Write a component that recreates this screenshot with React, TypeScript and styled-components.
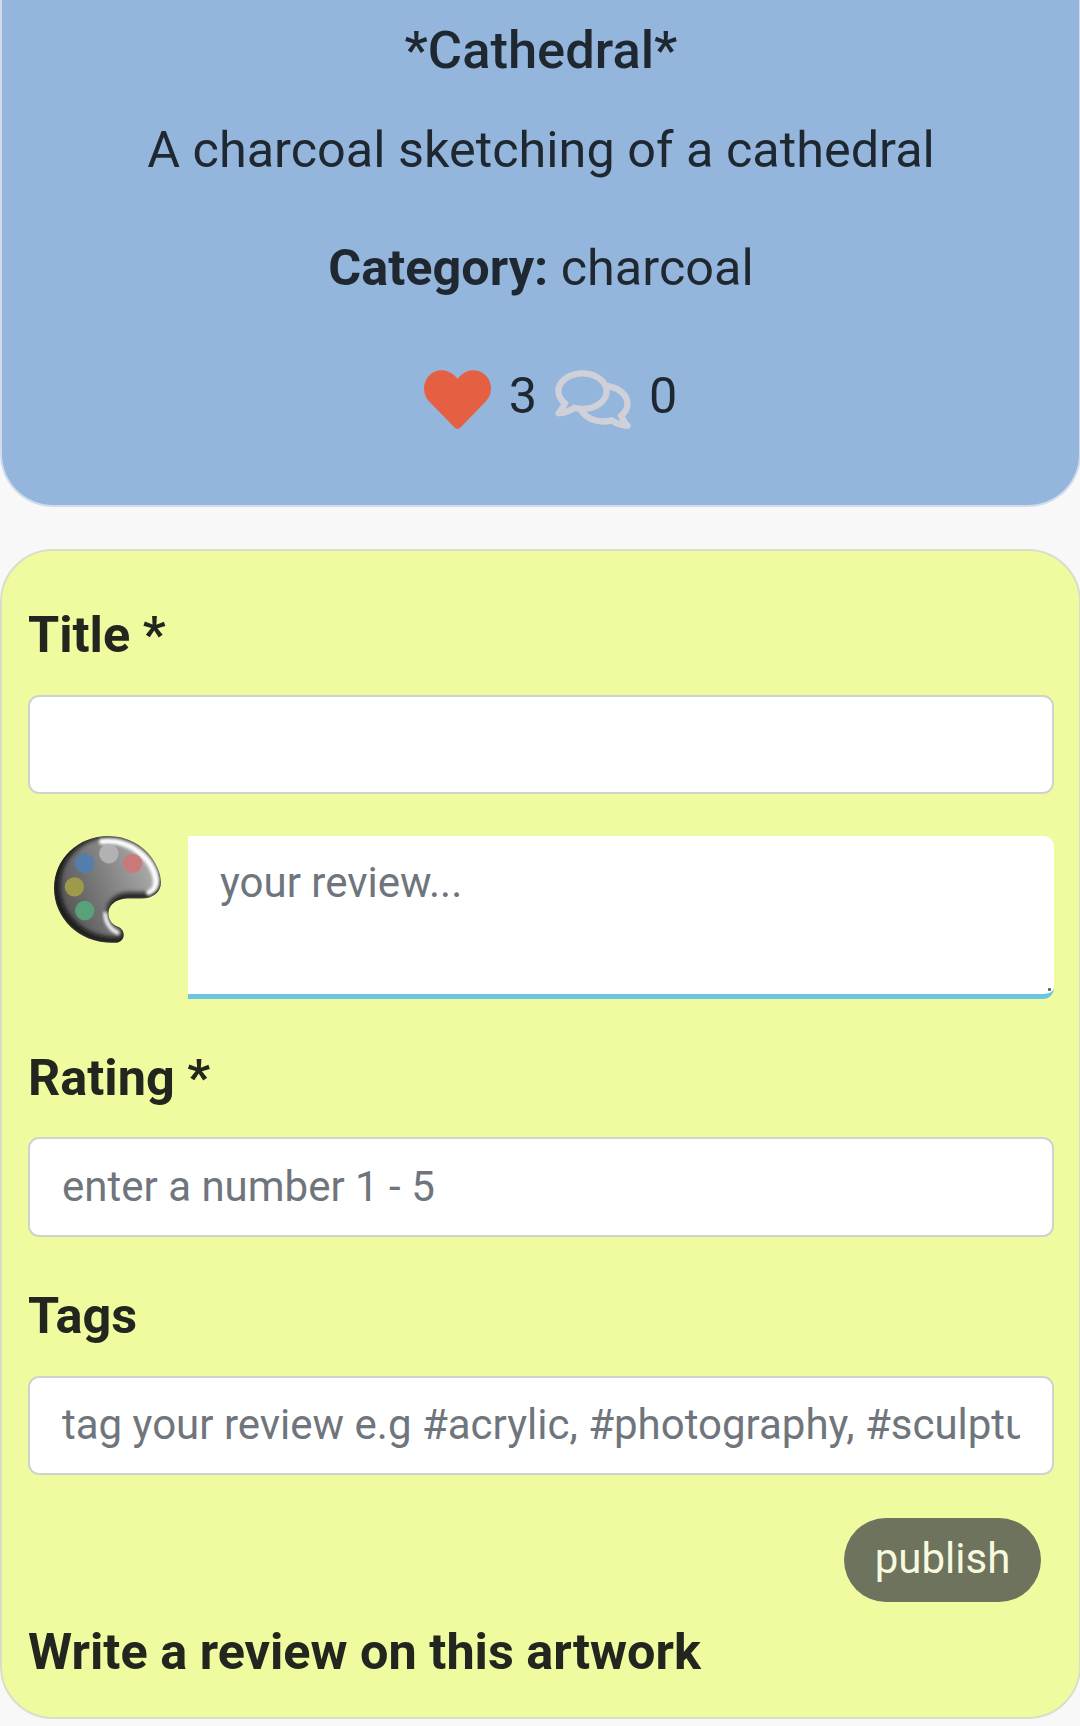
import React from "react";
import styled, { createGlobalStyle } from "styled-components";
import { FaHeart, FaRegComments } from "react-icons/fa";

const GlobalStyle = createGlobalStyle`
  *, *::before, *::after { box-sizing: border-box; }
  body {
    margin: 0;
    background: #f8f8f8;
    color: #1f2830;
    font-family: Roboto, "Liberation Sans", sans-serif;
    overflow: hidden;
  }
`;

const Page = styled.main`
  width: 1081px;
  height: 1726px;
  overflow: hidden;
  display: flex;
  flex-direction: column;
  gap: 42px;
  font-size: 50.4px;
  line-height: 75.6px;
`;

const ArtworkCard = styled.section`
  height: 507px;
  padding: 19px 0 0 1px;
  background: #94b6dd;
  border: 2px solid #d0dcec;
  border-top: 0;
  border-radius: 0 0 53px 53px;
  text-align: center;
`;

const ArtworkTitle = styled.h1`
  margin: 0 0 30px;
  font-size: 52.5px;
  line-height: 63px;
  font-weight: 500;
`;

const Paragraph = styled.p`
  margin: 0 0 42px;
`;

const Stats = styled.div`
  display: flex;
  justify-content: center;
  align-items: flex-start;
  padding: 11px 0 0 37px;
`;

const StatIcon = styled.span<{ $color: string; $width: number }>`
  display: flex;
  width: ${(p) => p.$width}px;
  height: 67px;
  margin-top: 8px;
  color: ${(p) => p.$color};
  svg { width: 100%; height: 100%; }
`;

const Count = styled.span`
  margin: 0 18px;
`;

const ReviewForm = styled.form`
  height: 1170px;
  padding: 46.4px 25px 0 26px;
  background: #f0fb9f;
  border: 2px solid #d9decb;
  border-radius: 53px;
`;

const Label = styled.label`
  display: block;
  height: 75px;
  margin-bottom: 22.6px;
  color: #22261f;
  font-weight: 700;
`;

const Input = styled.input`
  display: block;
  width: 100%;
  height: 99.4px;
  margin: 0 0 41.6px;
  padding: 0 32px 1px;
  border: 2px solid #cfd3cf;
  border-radius: 11px;
  background: #fff;
  font: 42px Roboto, "Liberation Sans", sans-serif;
  &::placeholder { color: #6f757c; opacity: 1; }
`;

const ReviewRow = styled.div`
  position: relative;
  display: flex;
  height: 163px;
  margin-bottom: 40.6px;
  padding-left: 26px;
`;

const Avatar = styled.svg`
  width: 107px;
  height: 107px;
  margin-right: 27px;
`;

const ReviewText = styled.textarea`
  flex: 1;
  height: 163px;
  padding: 15px 32px;
  border: 0;
  border-bottom: 5px solid #6ac6e2;
  border-radius: 0 11px 11px 0;
  background: #fff;
  font: 42px/63px Roboto, "Liberation Sans", sans-serif;
  resize: none;
  &::placeholder { color: #6f757c; opacity: 1; }
`;

const ResizeGrip = styled.span`
  position: absolute;
  right: 3px;
  bottom: 8px;
  width: 3px;
  height: 3px;
  border-radius: 1px;
  background: #5d6066;
`;

const Actions = styled.div`
  display: flex;
  justify-content: flex-end;
  padding: 1.2px 13px 0 0;
  margin-bottom: 12px;
`;

const PublishButton = styled.button`
  width: 197px;
  height: 84px;
  padding: 0 0 2px;
  border: 0;
  border-radius: 42px;
  background: #6e735d;
  color: #f6fadf;
  font: 42px/80px Roboto, "Liberation Sans", sans-serif;
`;

const palettePath =
  "M235 78C290 78 336 104 364 142C382 168 392 194 392 217C392 247 366 265 335 265L290 265C255 266 235 287 235 308C235 332 250 345 266 350C286 360 286 390 262 397C150 405 72 325 72 235C72 145 145 78 235 78Z";

const wells = [
  { x: 236, y: 131, fill: "#b5b5b7" },
  { x: 307, y: 160, fill: "#cb7774" },
  { x: 164, y: 160, fill: "#4f7fb1" },
  { x: 133, y: 230, fill: "#a39e4a" },
  { x: 164, y: 301, fill: "#57a77b" },
];

function PaletteAvatar() {
  return (
    <Avatar viewBox="72 78 320 320" aria-label="Avatar">
      <defs>
        <linearGradient id="body" x1="0" y1="0.65" x2="1" y2="0.25">
          <stop offset="0" stopColor="#505050" />
          <stop offset="0.45" stopColor="#7c7c7c" />
          <stop offset="1" stopColor="#b4b4b4" />
        </linearGradient>
        <clipPath id="shape"><path d={palettePath} /></clipPath>
        <filter id="soft" x="-20%" y="-20%" width="140%" height="140%">
          <feGaussianBlur stdDeviation="8" />
        </filter>
        <filter id="gloss" x="-20%" y="-20%" width="140%" height="140%">
          <feGaussianBlur stdDeviation="4" />
        </filter>
      </defs>
      <g clipPath="url(#shape)">
        <path d={palettePath} fill="url(#body)" />
        <path d={palettePath} transform="translate(7 -7)" fill="none" stroke="#0c0c0c" strokeWidth="19" filter="url(#soft)" />
        <path d="M215 95C300 84 368 148 377 208C379 230 371 240 356 247" fill="none" stroke="#fff" strokeWidth="17" strokeLinecap="round" filter="url(#gloss)" />
        <path d="M225 310C227 338 240 357 262 368" fill="none" stroke="#fff" strokeWidth="11" strokeLinecap="round" filter="url(#gloss)" />
        {wells.map((w) => (
          <circle key={w.fill} cx={w.x} cy={w.y} r="29" fill={w.fill} fillOpacity="0.92" />
        ))}
      </g>
    </Avatar>
  );
}

export default function App() {
  return (
    <>
      <GlobalStyle />
      <Page>
        <ArtworkCard>
          <ArtworkTitle>*Cathedral*</ArtworkTitle>
          <Paragraph>A charcoal sketching of a cathedral</Paragraph>
          <Paragraph><strong>Category:</strong> charcoal</Paragraph>
          <Stats>
            <StatIcon $color="#e56042" $width={67}><FaHeart /></StatIcon>
            <Count>3</Count>
            <StatIcon $color="#d0d1d8" $width={76}><FaRegComments /></StatIcon>
            <Count>0</Count>
          </Stats>
        </ArtworkCard>
        <ReviewForm>
          <Label htmlFor="title">Title *</Label>
          <Input id="title" />
          <ReviewRow>
            <PaletteAvatar />
            <ReviewText placeholder="your review..." />
            <ResizeGrip />
          </ReviewRow>
          <Label htmlFor="rating">Rating *</Label>
          <Input id="rating" placeholder="enter a number 1 - 5" />
          <Label htmlFor="tags">Tags</Label>
          <Input id="tags" placeholder="tag your review e.g #acrylic, #photography, #sculpture" />
          <Actions><PublishButton type="button">publish</PublishButton></Actions>
          <Label as="strong">Write a review on this artwork</Label>
        </ReviewForm>
      </Page>
    </>
  );
}
